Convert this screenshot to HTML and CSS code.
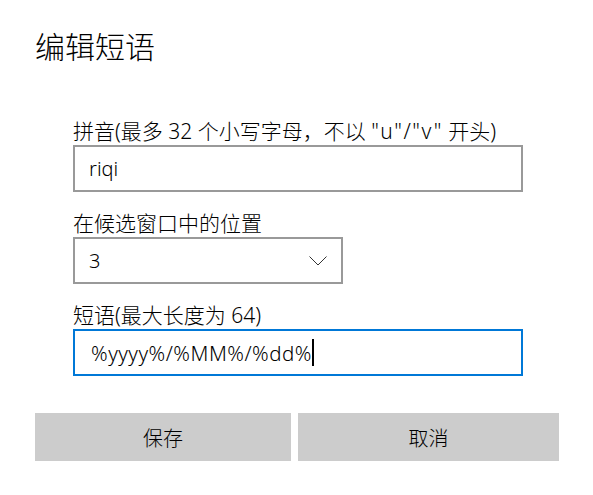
FILE: index.html
```html
<!DOCTYPE html>
<html lang="zh-CN">
<head>
<meta charset="utf-8">
<title>编辑短语</title>
<link rel="stylesheet" href="styles.css">
</head>
<body>
<div class="dialog">
  <h1 class="title">编辑短语</h1>
  <div class="form">
    <div class="field">
      <div class="label">拼音(最多 32 个小写字母，不以 <span class="quoted">"u"/"v"</span> 开头)</div>
      <div class="box wide"><span class="value">riqi</span></div>
    </div>
    <div class="field">
      <div class="label">在候选窗口中的位置</div>
      <div class="box narrow select">
        <span class="value">3</span>
        <svg class="chevron" width="18" height="10" viewBox="0 0 18 10"><polyline points="0.5,0.5 9,9 17.5,0.5" fill="none" stroke="#333" stroke-width="1"/></svg>
      </div>
    </div>
    <div class="field">
      <div class="label">短语(最大长度为 64)</div>
      <div class="box wide focus"><span class="value">%yyyy%/%MM%/%dd%</span><span class="caret"></span></div>
    </div>
  </div>
  <div class="buttons">
    <div class="btn">保存</div>
    <div class="btn">取消</div>
  </div>
</div>
</body>
</html>
```

FILE: styles.css
```css
html, body {
  margin: 0;
  padding: 0;
  background: #ffffff;
}
body {
  font-family: "Noto Sans", "Noto Sans CJK SC", sans-serif;
  font-weight: 300;
  color: #000000;
}
.dialog {
  width: 593px;
  height: 495px;
  display: flex;
  flex-direction: column;
}
.title {
  margin: 0;
  padding: 27px 0 0 35px;
  font-size: 30px;
  line-height: 40px;
  font-weight: 300;
}
.form {
  margin-top: 52px;
  padding-left: 73px;
  display: flex;
  flex-direction: column;
  gap: 19px;
}
.field {
  display: flex;
  flex-direction: column;
  gap: 2px;
}
.label {
  font-size: 21px;
  line-height: 24px;
}
.quoted { letter-spacing: 1.5px; }
.box {
  box-sizing: border-box;
  height: 47px;
  border: 2px solid #999999;
  display: flex;
  align-items: center;
  padding-left: 14px;
  font-size: 20px;
}
.wide { width: 450px; }
.narrow { width: 270px; }
.focus {
  border-color: #0078d7;
  padding-left: 16px;
  font-size: 20.5px;
  letter-spacing: 0.5px;
}
.select {
  justify-content: space-between;
  padding-right: 14px;
}
.chevron { display: block; }
.caret {
  display: inline-block;
  width: 2px;
  height: 27px;
  background: #000000;
  margin-left: 0;
}
.buttons {
  margin-top: 37px;
  padding-left: 35px;
  display: flex;
  gap: 7px;
}
.btn {
  width: 256px;
  height: 48px;
  background: #cccccc;
  display: flex;
  align-items: center;
  justify-content: center;
  font-size: 20px;
}
.btn + .btn { width: 261px; }
```
